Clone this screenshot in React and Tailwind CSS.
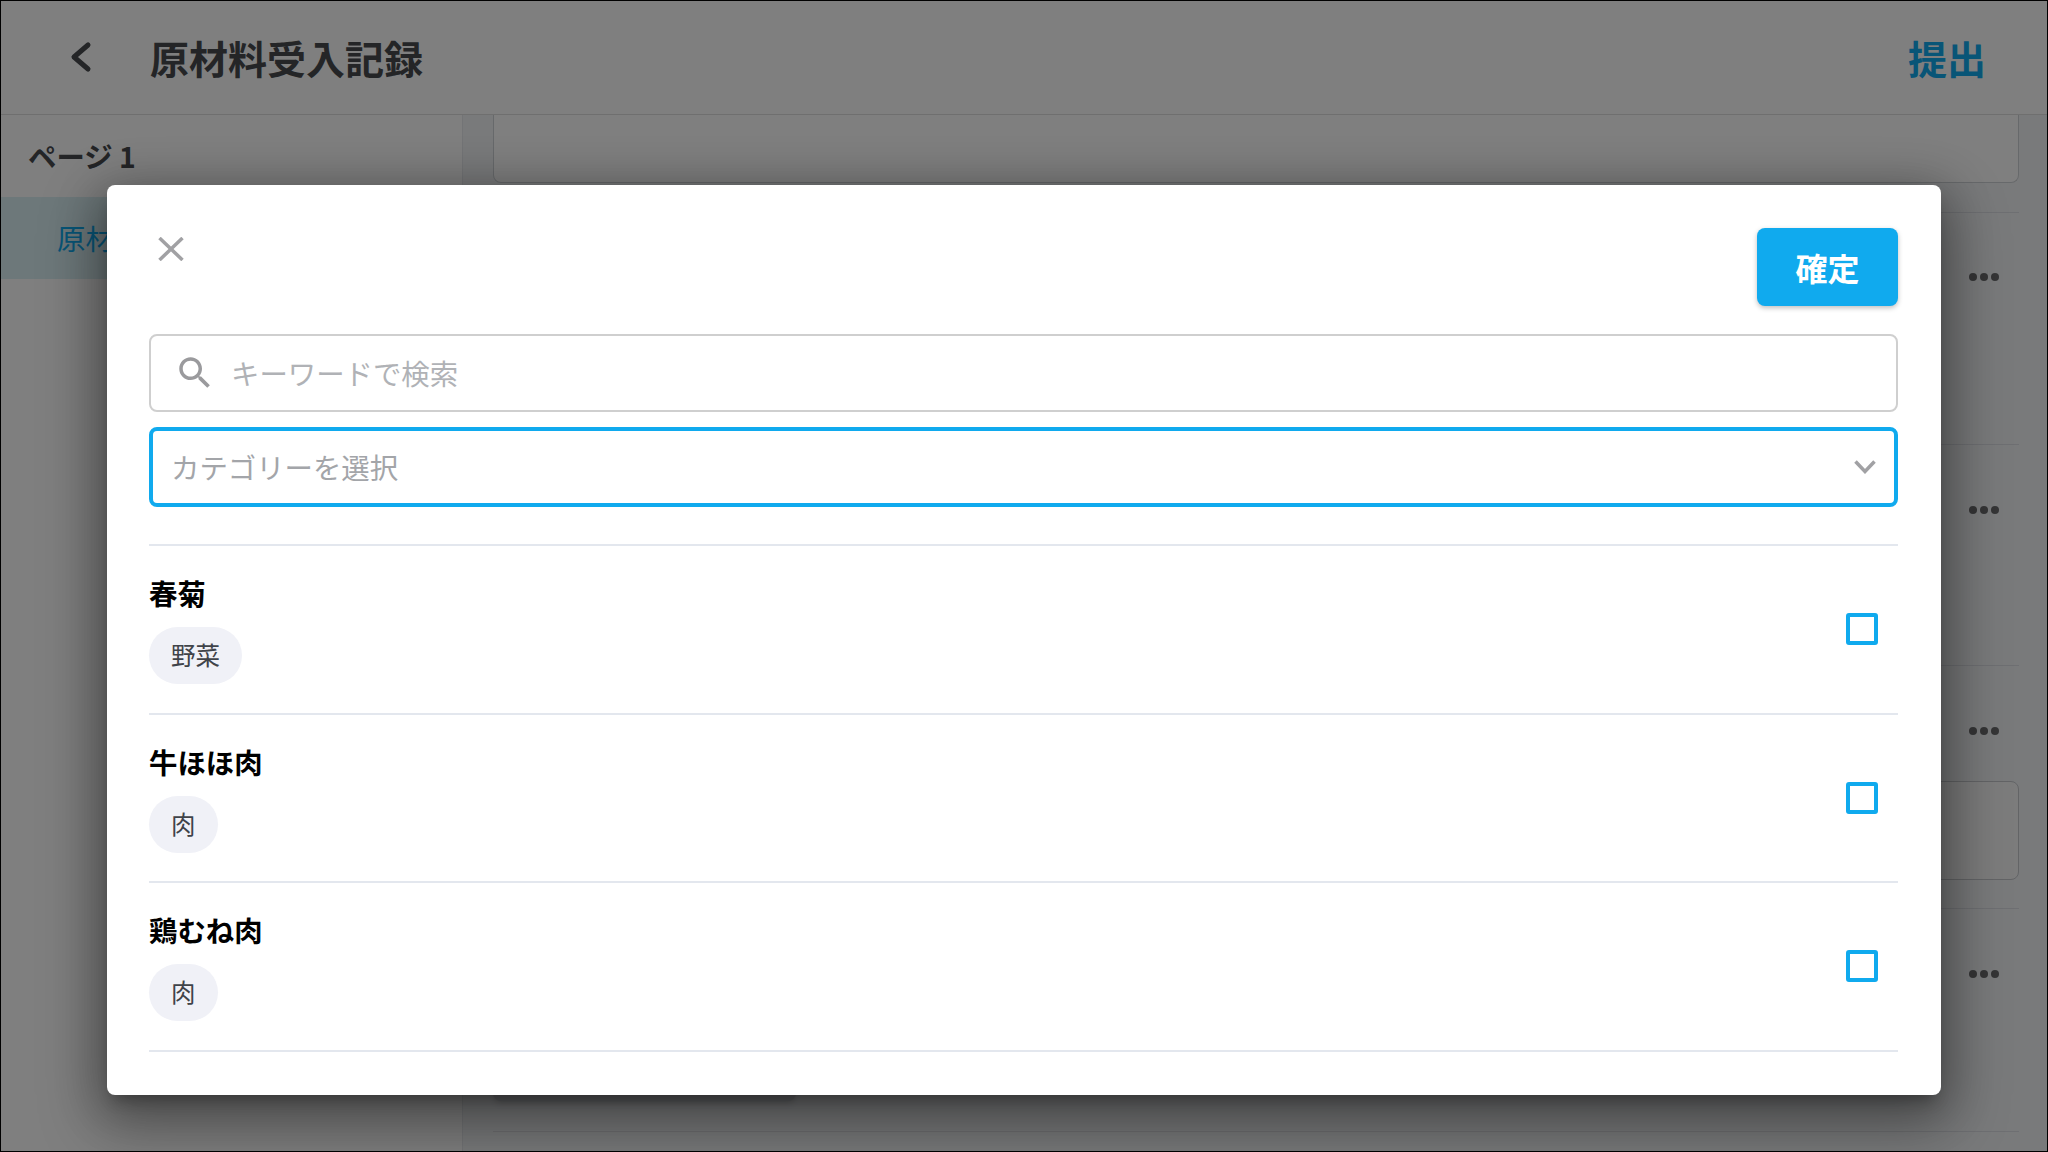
import React from 'react';

const font = { fontFamily: '"Noto Sans CJK JP", "Noto Sans", sans-serif' };

const items = [
  { name: '春菊', tag: '野菜' },
  { name: '牛ほほ肉', tag: '肉' },
  { name: '鶏むね肉', tag: '肉' },
];

function Dots() {
  return (
    <div className="flex gap-[3px] self-end mr-[20px]">
      <span className="w-2 h-2 rounded-full bg-[#6a6b6d]" />
      <span className="w-2 h-2 rounded-full bg-[#6a6b6d]" />
      <span className="w-2 h-2 rounded-full bg-[#6a6b6d]" />
    </div>
  );
}

function BackgroundPage() {
  return (
    <div className="flex flex-col h-full">
      {/* Header */}
      <header className="flex items-center justify-between h-[114px] shrink-0 bg-white border-b border-[#dedede] pl-[65px] pr-[61px]">
        <div className="flex items-center">
          <svg width="28" height="38" viewBox="0 0 28 38" fill="none" className="-mt-[2px]">
            <path d="M22 7 L8 19 L22 31" stroke="#484b4f" strokeWidth="5" strokeLinecap="round" strokeLinejoin="round" />
          </svg>
          <h1 className="ml-[56px] text-[39px] font-bold text-[#484b4f] leading-none">原材料受入記録</h1>
        </div>
        <button className="text-[39px] font-bold text-[#10aaee] leading-none">提出</button>
      </header>

      <div className="flex flex-1 min-h-0">
        {/* Sidebar */}
        <aside className="w-[462px] shrink-0 bg-white border-r border-[#e6e8ec]">
          <div className="h-[82px] pl-[27px] pt-[21px] text-[28.4px] font-bold text-[#484b4f] leading-[40px]">ページ 1</div>
          <div className="h-[82px] pl-[56px] flex items-center text-[28.4px] text-[#10aaee] bg-[#dbf0f5]">原材料受入記録</div>
        </aside>

        {/* Form rows behind the dialog */}
        <main className="flex-1 bg-[#f2f4f7] pl-[30px] pr-[28px] flex flex-col min-w-0">
          <div className="h-[98px] border-b border-[#dcdfe4] shrink-0">
            <div className="h-[68px] border border-t-0 border-[#cfd2d6] rounded-b-lg bg-white" />
          </div>
          <div className="h-[232px] border-b border-[#dcdfe4] shrink-0 flex flex-col pt-[60px]">
            <Dots />
          </div>
          <div className="h-[221px] border-b border-[#dcdfe4] shrink-0 flex flex-col pt-[61px]">
            <Dots />
          </div>
          <div className="h-[243px] border-b border-[#dcdfe4] shrink-0 flex flex-col pt-[61px]">
            <Dots />
            <div className="mt-[46px] h-[99px] border border-[#c6c9cd] rounded-lg bg-[#f8f8f8]" />
          </div>
          <div className="h-[223px] border-b border-[#dcdfe4] shrink-0 flex flex-col pt-[61px]">
            <Dots />
            <div className="mt-[54px] w-[303px] h-[69px] rounded-lg bg-[#d0d2d6] shadow-md" />
          </div>
        </main>
      </div>
    </div>
  );
}

function ItemRow({ name, tag }) {
  return (
    <div className="flex items-center justify-between h-[168.5px] border-b-2 border-[#e3e7ee]">
      <div>
        <div className="text-[28.4px] font-bold text-black leading-[38px]">{name}</div>
        <span className="inline-flex items-center mt-[15px] h-[57px] px-[22px] rounded-full bg-[#f0f1f7] text-[24.5px] text-[#3f4349]">
          {tag}
        </span>
      </div>
      <div className="w-8 h-8 mr-[20px] border-4 border-[#10aaee] rounded-[3px] bg-white" />
    </div>
  );
}

export default function App() {
  return (
    <div style={font} className="relative w-full h-screen overflow-hidden border border-black box-border">
      <BackgroundPage />

      {/* Overlay */}
      <div className="absolute inset-0 bg-black/50" />

      {/* Dialog */}
      <div className="absolute left-[106px] top-[184px] w-[1834px] h-[910px] rounded-lg bg-white pl-[42px] pr-[43px] pt-[43px] shadow-[0_11px_15px_-7px_rgba(0,0,0,0.3),0_24px_60px_10px_rgba(0,0,0,0.3),0_9px_46px_8px_rgba(0,0,0,0.2)]">
        <div className="flex items-start justify-between">
          <button className="mt-[9px] ml-[9px]">
            <svg width="26" height="24" viewBox="0 0 26 24" fill="none" className="block">
              <path d="M1.5 1 L24.5 23 M24.5 1 L1.5 23" stroke="#a1a1a4" strokeWidth="3.5" />
            </svg>
          </button>
          <button className="w-[141px] h-[78px] rounded-lg bg-[#10aaee] text-white text-[32px] font-bold shadow-[0_2px_5px_rgba(0,0,0,0.25)]">
            確定
          </button>
        </div>

        {/* Search */}
        <div className="mt-[28px] h-[78px] flex items-center border-2 border-[#cfcfcf] rounded-lg pl-[23px]">
          <svg width="42" height="42" viewBox="0 0 24 24" fill="#9a9a9d">
            <path d="M15.5 14h-.79l-.28-.27C15.41 12.59 16 11.11 16 9.5 16 5.91 13.09 3 9.5 3S3 5.91 3 9.5 5.91 16 9.5 16c1.61 0 3.09-.59 4.23-1.57l.27.28v.79l5 4.99L20.49 19l-4.99-5zm-6 0C7.01 14 5 11.99 5 9.5S7.01 5 9.5 5 14 7.01 14 9.5 11.99 14 9.5 14z" />
          </svg>
          <span className="ml-[15px] text-[28.4px] text-[#b0b2b6]">キーワードで検索</span>
        </div>

        {/* Category select */}
        <div className="mt-[15px] h-[80px] flex items-center justify-between border-4 border-[#10aaee] rounded-lg pl-[18px] pr-[18px]">
          <span className="text-[28.4px] text-[#a3a5a9]">カテゴリーを選択</span>
          <svg width="22" height="14" viewBox="0 0 22 14" fill="none">
            <path d="M1.5 1.5 L11 11.5 L20.5 1.5" stroke="#a1a1a4" strokeWidth="3.5" />
          </svg>
        </div>

        {/* Items */}
        <div className="mt-[37px] border-t-2 border-[#e3e7ee]">
          {items.map((item) => (
            <ItemRow key={item.name} name={item.name} tag={item.tag} />
          ))}
        </div>
      </div>
    </div>
  );
}
